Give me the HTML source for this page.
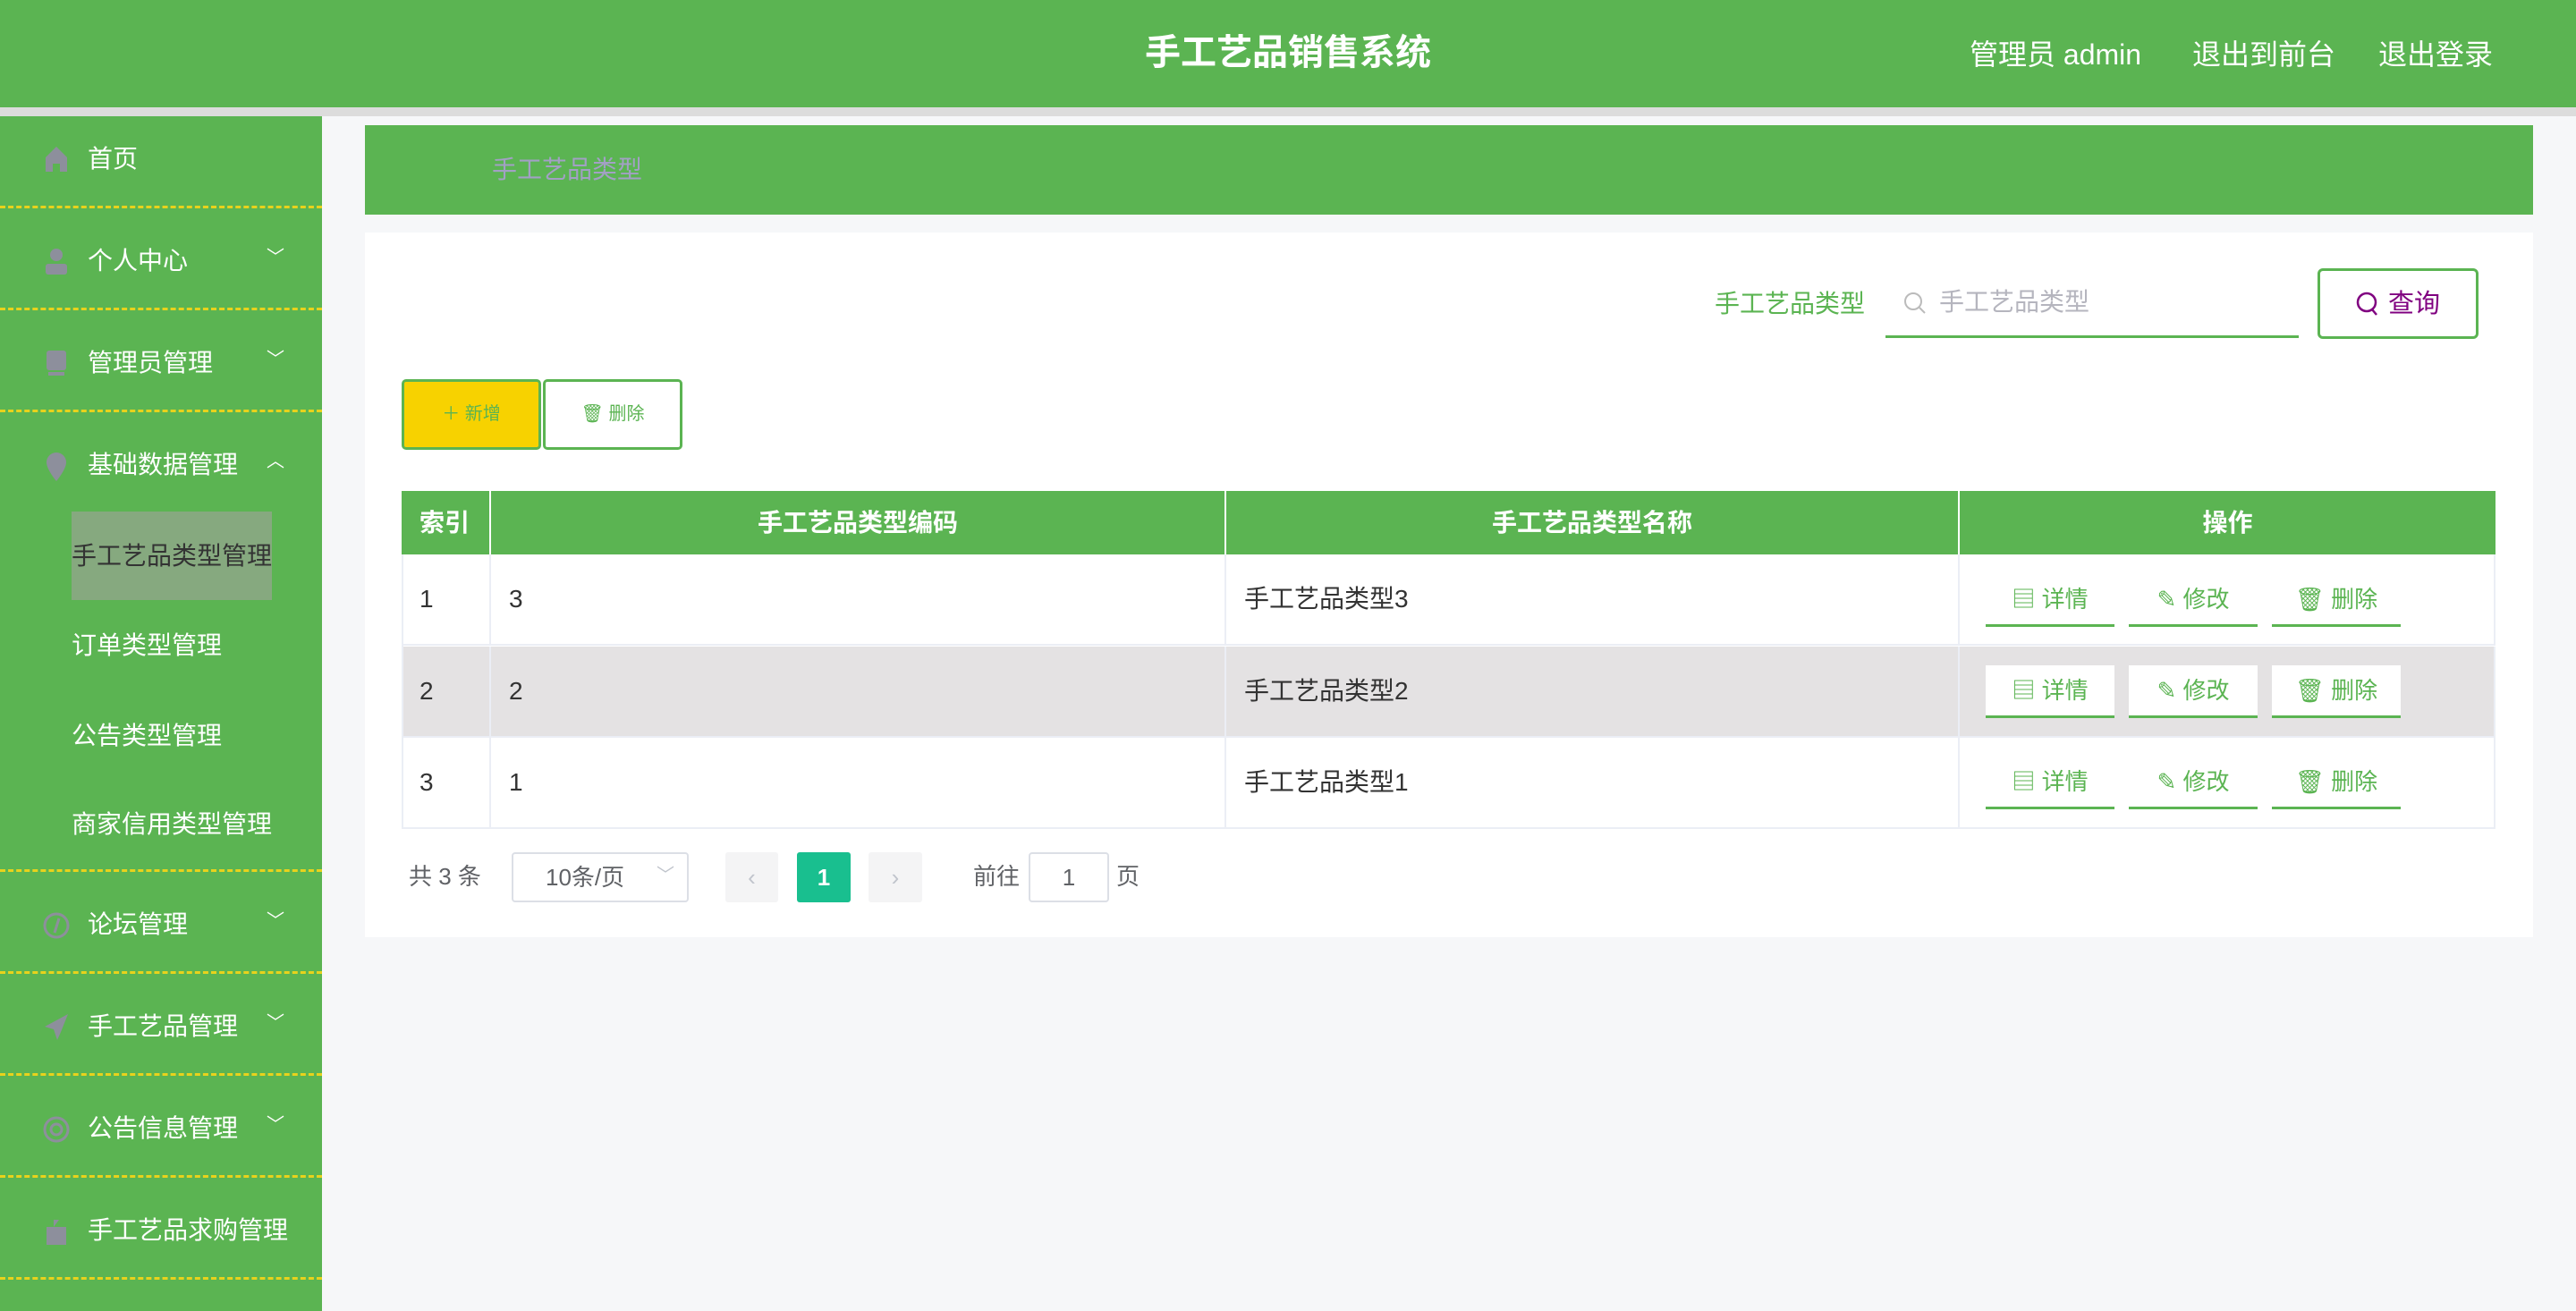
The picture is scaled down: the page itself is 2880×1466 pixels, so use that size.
<!DOCTYPE html>
<html><head><meta charset="utf-8"><style>
*{margin:0;padding:0;box-sizing:border-box}
body{width:2880px;height:1466px;overflow:hidden;background:#f6f7f9;font-family:"Liberation Sans","Noto Sans CJK SC",sans-serif;position:relative}
.abs{position:absolute}
.hdr{left:0;top:0;width:2880px;height:120px;background:#5bb452}
.strip{left:0;top:120px;width:2880px;height:10px;background:#dcdcdc}
.title{left:0;width:2880px;top:34px;text-align:center;color:#fff;font-size:40px;font-weight:bold;line-height:50px}
.hl{top:40px;color:#fff;font-size:32px;line-height:42px}
.side{left:0;top:130px;width:360px;height:1336px;background:#5bb452}
.item{left:0;width:360px;color:#fff;font-size:28px;line-height:40px}
.item .t{position:absolute;left:98px;top:0;white-space:nowrap}
.item svg{position:absolute;left:48px;top:4px}
.item .ar{position:absolute;left:298px;top:-4px;font-size:20px;color:#fff}
.line{left:0;width:360px;height:0;border-top:3px dashed #e8d21c}
.sub{left:80px;color:#333;font-size:28px;line-height:40px;white-space:nowrap}
.bc{left:408px;top:140px;width:2424px;height:100px;background:#5bb452}
.card{left:408px;top:260px;width:2424px;height:788px;background:#fff}
.th{top:549px;height:71px;background:#5bb452;color:#fff;font-size:28px;font-weight:bold;line-height:71px;text-align:center;border-right:2px solid #fff}
.td{height:102px;border-right:2px solid #ebeef5;border-bottom:2px solid #ebeef5;font-size:28px;color:#333;line-height:100px;padding-left:20px}
.op{width:144px;height:59px;background:#fff;border-bottom:3px solid #5bb452;color:#5bb452;font-size:26px;line-height:56px;text-align:center}
</style></head><body>
<div class="abs hdr"></div>
<div class="abs strip"></div>
<div class="abs title">手工艺品销售系统</div>
<div class="abs hl" style="left:2202px">管理员 admin</div>
<div class="abs hl" style="left:2451px">退出到前台</div>
<div class="abs hl" style="left:2659px">退出登录</div>

<div class="abs side"></div>
<div class="abs item" style="top:158px"><svg width="30" height="32" viewBox="0 0 30 32"><path d="M15 2L3 14v16h8v-9h8v9h8V14z" fill="#8d8f9c"/></svg><span class="t">首页</span></div>
<div class="abs line" style="top:230px"></div>
<div class="abs item" style="top:272px"><svg width="30" height="32" viewBox="0 0 30 32"><circle cx="15" cy="9" r="7" fill="#8d8f9c"/><rect x="3" y="19" width="24" height="12" rx="3" fill="#8d8f9c"/></svg><span class="t">个人中心</span><span class="ar">﹀</span></div>
<div class="abs line" style="top:344px"></div>
<div class="abs item" style="top:386px"><svg width="30" height="32" viewBox="0 0 30 32"><rect x="4" y="2" width="22" height="22" rx="3" fill="#8d8f9c"/><rect x="6" y="26" width="18" height="4" fill="#8d8f9c"/></svg><span class="t">管理员管理</span><span class="ar">﹀</span></div>
<div class="abs line" style="top:458px"></div>
<div class="abs item" style="top:500px"><svg width="30" height="36" viewBox="0 0 30 36"><path d="M15 2a11 11 0 0 0-11 11c0 8 11 21 11 21s11-13 11-21A11 11 0 0 0 15 2z" fill="#8d8f9c"/></svg><span class="t">基础数据管理</span><span class="ar">︿</span></div>
<div class="abs" style="left:80px;top:572px;width:224px;height:99px;background:#86a97f"></div>
<div class="abs sub" style="top:602px">手工艺品类型管理</div>
<div class="abs sub" style="top:702px;color:#fff">订单类型管理</div>
<div class="abs sub" style="top:803px;color:#fff">公告类型管理</div>
<div class="abs sub" style="top:902px;color:#fff">商家信用类型管理</div>
<div class="abs line" style="top:972px"></div>
<div class="abs item" style="top:1014px"><svg width="30" height="34" viewBox="0 0 30 34"><circle cx="15" cy="17" r="13" fill="none" stroke="#8d8f9c" stroke-width="3"/><path d="M18 9l-5 16" stroke="#8d8f9c" stroke-width="3"/></svg><span class="t">论坛管理</span><span class="ar">﹀</span></div>
<div class="abs line" style="top:1086px"></div>
<div class="abs item" style="top:1128px"><svg width="30" height="34" viewBox="0 0 30 34"><path d="M28 2L2 16l10 3 4 12 4-9z" fill="#8d8f9c"/></svg><span class="t">手工艺品管理</span><span class="ar">﹀</span></div>
<div class="abs line" style="top:1200px"></div>
<div class="abs item" style="top:1242px"><svg width="30" height="34" viewBox="0 0 30 34"><circle cx="15" cy="17" r="13" fill="none" stroke="#8d8f9c" stroke-width="3"/><circle cx="15" cy="17" r="6" fill="none" stroke="#8d8f9c" stroke-width="3"/></svg><span class="t">公告信息管理</span><span class="ar">﹀</span></div>
<div class="abs line" style="top:1314px"></div>
<div class="abs item" style="top:1356px"><svg width="30" height="34" viewBox="0 0 30 34"><path d="M4 12h22v20H4z M12 12V4h6" fill="#8d8f9c"/></svg><span class="t">手工艺品求购管理</span></div>
<div class="abs line" style="top:1428px"></div>

<div class="abs bc"></div>
<div class="abs" style="left:550px;top:172px;font-size:28px;color:#a2a0c4;line-height:36px">手工艺品类型</div>
<div class="abs card"></div>

<div class="abs" style="left:1917px;top:322px;font-size:28px;color:#5bb452;line-height:36px">手工艺品类型</div>
<div class="abs" style="left:2108px;top:300px;width:462px;height:78px;border-bottom:3px solid #5bb452"></div>
<svg class="abs" style="left:2128px;top:326px" width="26" height="26" viewBox="0 0 26 26"><circle cx="11" cy="11" r="9" fill="none" stroke="#bbb" stroke-width="2"/><path d="M18 18l6 6" stroke="#bbb" stroke-width="2"/></svg>
<div class="abs" style="left:2168px;top:320px;font-size:28px;color:#b5b5be;line-height:36px">手工艺品类型</div>
<div class="abs" style="left:2591px;top:300px;width:180px;height:79px;border:3px solid #5bb452;border-radius:6px;background:#fff"></div>
<svg class="abs" style="left:2634px;top:326px" width="26" height="28" viewBox="0 0 26 28"><circle cx="12" cy="12" r="10" fill="none" stroke="#800080" stroke-width="2.5"/><path d="M18 20l5 6" stroke="#800080" stroke-width="2.5"/></svg>
<div class="abs" style="left:2670px;top:322px;font-size:29px;color:#800080;line-height:36px">查询</div>

<div class="abs" style="left:449px;top:424px;width:156px;height:79px;background:#f7d200;border:3px solid #5bb452;border-radius:5px;color:#5bb452;font-size:20px;line-height:73px;text-align:center">＋ 新增</div>
<div class="abs" style="left:607px;top:424px;width:156px;height:79px;background:#fff;border:3px solid #5bb452;border-radius:5px;color:#5bb452;font-size:20px;line-height:73px;text-align:center">🗑︎ 删除</div>

<div class="abs th" style="left:449px;width:100px;text-align:left;padding-left:20px">索引</div>
<div class="abs th" style="left:549px;width:822px">手工艺品类型编码</div>
<div class="abs th" style="left:1371px;width:820px">手工艺品类型名称</div>
<div class="abs th" style="left:2191px;width:599px;border-right:0">操作</div>

<div class="abs" style="left:449px;top:723px;width:2341px;height:102px;background:#e4e2e3"></div>
<div class="abs" style="left:449px;top:620px;width:2px;height:307px;background:#ebeef5"></div>
<div class="abs td" style="left:449px;top:620px;width:100px">1</div>
<div class="abs td" style="left:549px;top:620px;width:822px">3</div>
<div class="abs td" style="left:1371px;top:620px;width:820px">手工艺品类型3</div>
<div class="abs td" style="left:2191px;top:620px;width:599px"></div>
<div class="abs td" style="left:449px;top:723px;width:100px">2</div>
<div class="abs td" style="left:549px;top:723px;width:822px">2</div>
<div class="abs td" style="left:1371px;top:723px;width:820px">手工艺品类型2</div>
<div class="abs td" style="left:2191px;top:723px;width:599px"></div>
<div class="abs td" style="left:449px;top:825px;width:100px">3</div>
<div class="abs td" style="left:549px;top:825px;width:822px">1</div>
<div class="abs td" style="left:1371px;top:825px;width:820px">手工艺品类型1</div>
<div class="abs td" style="left:2191px;top:825px;width:599px"></div>

<div class="abs op" style="left:2220px;top:642px">▤ 详情</div>
<div class="abs op" style="left:2380px;top:642px">✎ 修改</div>
<div class="abs op" style="left:2540px;top:642px">🗑︎ 删除</div>
<div class="abs op" style="left:2220px;top:744px">▤ 详情</div>
<div class="abs op" style="left:2380px;top:744px">✎ 修改</div>
<div class="abs op" style="left:2540px;top:744px">🗑︎ 删除</div>
<div class="abs op" style="left:2220px;top:846px">▤ 详情</div>
<div class="abs op" style="left:2380px;top:846px">✎ 修改</div>
<div class="abs op" style="left:2540px;top:846px">🗑︎ 删除</div>

<div class="abs" style="left:457px;top:962px;font-size:26px;color:#606266;line-height:36px">共 3 条</div>
<div class="abs" style="left:572px;top:953px;width:198px;height:56px;border:2px solid #dcdfe6;border-radius:4px;font-size:26px;color:#606266;line-height:52px;padding-left:36px">10条/页<span style="position:absolute;right:14px;top:-2px;color:#c0c4cc;font-size:20px">﹀</span></div>
<div class="abs" style="left:811px;top:953px;width:59px;height:56px;background:#f4f4f5;border-radius:3px;color:#c0c4cc;font-size:26px;line-height:56px;text-align:center">‹</div>
<div class="abs" style="left:891px;top:953px;width:60px;height:56px;background:#19bf8f;border-radius:3px;color:#fff;font-size:26px;font-weight:bold;line-height:56px;text-align:center">1</div>
<div class="abs" style="left:971px;top:953px;width:60px;height:56px;background:#f4f4f5;border-radius:3px;color:#c0c4cc;font-size:26px;line-height:56px;text-align:center">›</div>
<div class="abs" style="left:1088px;top:962px;font-size:26px;color:#606266;line-height:36px">前往</div>
<div class="abs" style="left:1150px;top:953px;width:90px;height:56px;border:2px solid #dcdfe6;border-radius:4px;font-size:26px;color:#606266;line-height:52px;text-align:center">1</div>
<div class="abs" style="left:1248px;top:962px;font-size:26px;color:#606266;line-height:36px">页</div>
</body></html>
